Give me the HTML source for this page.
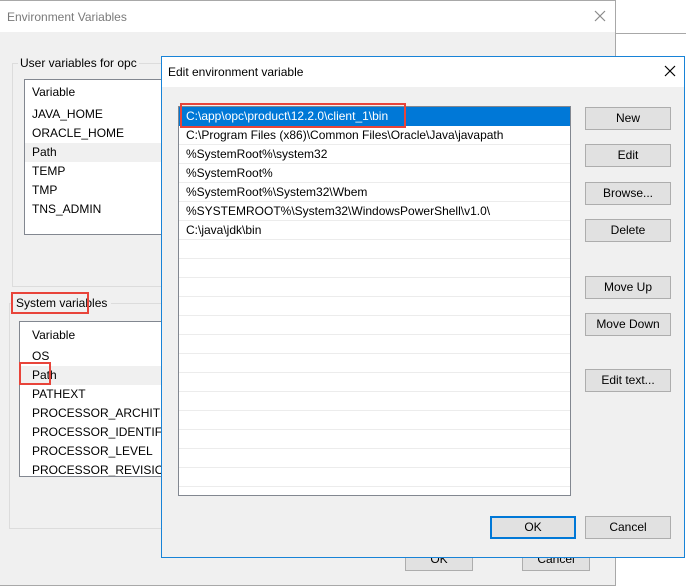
<!DOCTYPE html>
<html><head><style>
*{margin:0;padding:0;box-sizing:border-box}
body{width:686px;height:587px;background:#fff;position:relative;overflow:hidden;font-family:"Liberation Sans",sans-serif;font-size:12px;color:#000}
.a{position:absolute}
.btn{position:absolute;background:#e1e1e1;border:1px solid #adadad;text-align:center;line-height:21px;height:23px}
.row{position:absolute;left:0;right:0;height:19px;line-height:19px;padding-left:7px;white-space:nowrap}
.frow{position:absolute;left:0;right:0;height:19px;line-height:19px;padding-left:7px;border-bottom:1px solid #ececec;white-space:nowrap}
.red{position:absolute;border:2px solid #e8443a}
</style></head><body>
<div class="a" style="left:0;top:0;width:616px;height:586px;border-top:1px solid #a8a8a8;border-right:1px solid #a8a8a8;border-bottom:1px solid #a8a8a8;background:#f0f0f0"></div>
<div class="a" style="left:0;top:1px;width:615px;height:31px;background:#fff"></div>
<div class="a" style="left:7px;top:10px;color:#7a7a7a">Environment Variables</div>
<svg class="a" style="left:594px;top:10px" width="12" height="12"><path d="M1 1L11 11M11 1L1 11" stroke="#8a8a8a" stroke-width="1.2"/></svg>
<div class="a" style="left:616px;top:33px;width:70px;height:1px;background:#a8a8a8"></div>
<div class="a" style="left:12px;top:63px;width:160px;height:224px;border:1px solid #dcdcdc"></div>
<div class="a" style="left:18px;top:56px;background:#f0f0f0;padding:0 2px">User variables for opc</div>
<div class="a" style="left:24px;top:79px;width:150px;height:156px;border:1px solid #828790;background:#fff">
 <div class="row" style="top:3px">Variable</div>
 <div class="row" style="top:25px">JAVA_HOME</div>
 <div class="row" style="top:44px">ORACLE_HOME</div>
 <div class="row" style="top:63px;background:#f0f0f0">Path</div>
 <div class="row" style="top:82px">TEMP</div>
 <div class="row" style="top:101px">TMP</div>
 <div class="row" style="top:120px">TNS_ADMIN</div>
</div>
<div class="a" style="left:9px;top:303px;width:160px;height:226px;border:1px solid #dcdcdc"></div>
<div class="a" style="left:12px;top:294px;background:#f0f0f0;padding:0 4px;height:19px;line-height:18px">System variables</div>
<div class="red" style="left:11px;top:292px;width:78px;height:22px"></div>
<div class="a" style="left:19px;top:321px;width:150px;height:156px;border:1px solid #828790;background:#fff;overflow:hidden">
 <div class="row" style="top:4px;left:5px">Variable</div>
 <div class="row" style="top:25px;left:5px">OS</div>
 <div class="row" style="top:44px;background:#f0f0f0;padding-left:12px">Path</div>
 <div class="row" style="top:63px;left:5px">PATHEXT</div>
 <div class="row" style="top:82px;left:5px">PROCESSOR_ARCHITECTURE</div>
 <div class="row" style="top:101px;left:5px">PROCESSOR_IDENTIFIER</div>
 <div class="row" style="top:120px;left:5px">PROCESSOR_LEVEL</div>
 <div class="row" style="top:139px;left:5px">PROCESSOR_REVISION</div>
</div>
<div class="red" style="left:19px;top:362px;width:32px;height:23px"></div>
<div class="btn" style="left:405px;top:548px;width:68px">OK</div>
<div class="btn" style="left:522px;top:548px;width:68px">Cancel</div>
<div class="a" style="left:161px;top:56px;width:524px;height:502px;border:1px solid #1883d7;background:#f0f0f0"></div>
<div class="a" style="left:162px;top:57px;width:522px;height:30px;background:#fff"></div>
<div class="a" style="left:168px;top:65px">Edit environment variable</div>
<svg class="a" style="left:664px;top:65px" width="12" height="12"><path d="M1 1L11 11M11 1L1 11" stroke="#000" stroke-width="1.2"/></svg>
<div class="a" style="left:178px;top:106px;width:393px;height:390px;border:1px solid #828790;background:#fff;overflow:hidden">
 <div class="frow" style="top:0;background:#0078d7;color:#fff;border-color:#0078d7">C:\app\opc\product\12.2.0\client_1\bin</div>
 <div class="frow" style="top:19px">C:\Program Files (x86)\Common Files\Oracle\Java\javapath</div>
 <div class="frow" style="top:38px">%SystemRoot%\system32</div>
 <div class="frow" style="top:57px">%SystemRoot%</div>
 <div class="frow" style="top:76px">%SystemRoot%\System32\Wbem</div>
 <div class="frow" style="top:95px">%SYSTEMROOT%\System32\WindowsPowerShell\v1.0\</div>
 <div class="frow" style="top:114px">C:\java\jdk\bin</div>
 <div class="frow" style="top:133px"></div><div class="frow" style="top:152px"></div><div class="frow" style="top:171px"></div><div class="frow" style="top:190px"></div><div class="frow" style="top:209px"></div><div class="frow" style="top:228px"></div><div class="frow" style="top:247px"></div><div class="frow" style="top:266px"></div><div class="frow" style="top:285px"></div><div class="frow" style="top:304px"></div><div class="frow" style="top:323px"></div><div class="frow" style="top:342px"></div><div class="frow" style="top:361px"></div>
</div>
<div class="red" style="left:180px;top:103px;width:226px;height:25px"></div>
<div class="btn" style="left:585px;top:107px;width:86px">New</div>
<div class="btn" style="left:585px;top:144px;width:86px">Edit</div>
<div class="btn" style="left:585px;top:182px;width:86px">Browse...</div>
<div class="btn" style="left:585px;top:219px;width:86px">Delete</div>
<div class="btn" style="left:585px;top:276px;width:86px">Move Up</div>
<div class="btn" style="left:585px;top:313px;width:86px">Move Down</div>
<div class="btn" style="left:585px;top:369px;width:86px">Edit text...</div>
<div class="btn" style="left:490px;top:516px;width:86px;border:2px solid #0078d7;line-height:19px">OK</div>
<div class="btn" style="left:585px;top:516px;width:86px">Cancel</div>
</body></html>
